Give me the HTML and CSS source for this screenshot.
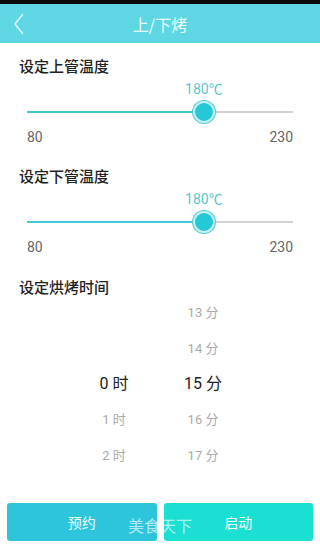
FILE: index.html
```html
<!DOCTYPE html>
<html lang="zh">
<head>
<meta charset="utf-8">
<link rel="stylesheet" href="styles.css">
</head>
<body>
<div class="app">
  <div class="statusbar"></div>
  <header class="topbar">
    <svg class="back" width="12" height="22" viewBox="0 0 12 22"><path d="M10 1 L2 11 L10 21" fill="none" stroke="#d9f7fa" stroke-width="1.6"/></svg>
    <div class="title">上/下烤</div>
  </header>
  <main class="content">
    <section class="block">
      <div class="label">设定上管温度</div>
      <div class="slider">
        <div class="value" style="left: 66.5%">180℃</div>
        <div class="track"><div class="fill" style="width: 66.5%"></div><div class="thumb" style="left: 66.5%"></div></div>
        <div class="range"><span>80</span><span>230</span></div>
      </div>
    </section>
    <section class="block">
      <div class="label">设定下管温度</div>
      <div class="slider">
        <div class="value" style="left: 66.5%">180℃</div>
        <div class="track"><div class="fill" style="width: 66.5%"></div><div class="thumb" style="left: 66.5%"></div></div>
        <div class="range"><span>80</span><span>230</span></div>
      </div>
    </section>
    <section class="block">
      <div class="label">设定烘烤时间</div>
      <div class="picker">
        <div class="col hours">
          <div class="item"></div>
          <div class="item"></div>
          <div class="item sel">0 时</div>
          <div class="item">1 时</div>
          <div class="item">2 时</div>
        </div>
        <div class="col mins">
          <div class="item">13 分</div>
          <div class="item">14 分</div>
          <div class="item sel">15 分</div>
          <div class="item">16 分</div>
          <div class="item">17 分</div>
        </div>
      </div>
    </section>
  </main>
  <footer class="actions">
    <button class="btn reserve">预约</button>
    <button class="btn start">启动</button>
    <div class="watermark">美食天下</div>
  </footer>
</div>
</body>
</html>
```
FILE: styles.css
```css
* { box-sizing: border-box; }
html, body { margin: 0; padding: 0; background: #fff; }
body { font-family: "Noto Sans CJK SC", "Roboto", "Noto Sans", sans-serif; }
.app { width: 320px; height: 551px; display: flex; flex-direction: column; position: relative; overflow: hidden; }
.statusbar { height: 4px; background: #0a0a0a; flex: none; }
.topbar { height: 39px; background: #5fd6e3; flex: none; position: relative; display: flex; align-items: center; justify-content: center; }
.back { position: absolute; left: 13px; top: 9px; }
.title { color: #eafcfd; font-size: 16px; line-height: 20px; }
.content { flex: 1; }
.label { font-size: 15px; line-height: 20px; color: #222; font-weight: 500; padding-left: 19px; }
.block:first-child .label { margin-top: 13px; }
.block:nth-child(2) .label { margin-top: 20px; }
.block:nth-child(3) .label { margin-top: 21px; }
.slider { position: relative; margin: 0 27px; padding-top: 35px; }
.value { position: absolute; top: 3px; transform: translateX(-50%); color: #5ec3cd; font-family: "Roboto", "Noto Sans CJK SC", sans-serif; font-size: 14px; line-height: 20px; white-space: nowrap; }
.track { position: relative; height: 2px; background: #d2d2d2; }
.fill { height: 2px; background: #3fc9d3; }
.thumb { position: absolute; top: 1px; width: 22px; height: 22px; margin: -11px 0 0 -11px; border-radius: 50%; background: #23c9d6; border: 2px solid #c8f0f3; box-shadow: 0 0 0 1px #4fcdd7; }
.range { display: flex; justify-content: space-between; margin-top: 15px; color: #666; font-family: "Roboto", sans-serif; font-size: 14px; line-height: 18px; }
.picker { display: flex; margin-top: -2px; padding-left: 96px; gap: 53px; }
.col { display: flex; flex-direction: column; width: 36px; align-items: center; }
.item { height: 35.7px; line-height: 35.7px; font-size: 13px; color: #aaa; white-space: nowrap; font-family: "Roboto", "Noto Sans CJK SC", sans-serif; }
.item.sel { font-size: 16px; color: #222; }
.actions { flex: none; height: 54px; display: flex; gap: 7px; padding: 0 7px 10px 7px; position: relative; }
.btn { flex: 1; height: 38px; border: none; border-radius: 3px; color: #f1fdfd; font-size: 14px; font-family: "Noto Sans CJK SC", sans-serif; margin-top: 6px; }
.reserve { background: #2dc5dc; }
.start { background: #1bdfd2; }
.watermark { position: absolute; left: 128px; top: 18px; font-size: 16px; line-height: 20px; color: rgba(255,255,255,0.65); }
```
